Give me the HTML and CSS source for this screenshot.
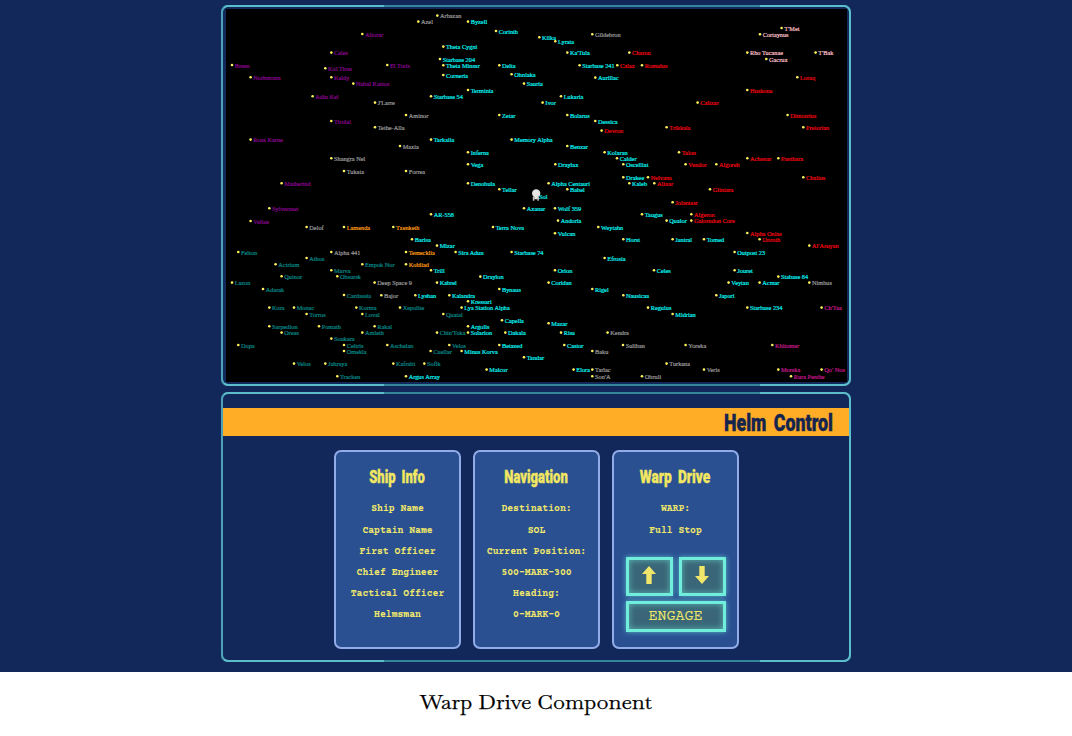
FILE: index.html
```html
<!DOCTYPE html>
<html lang="en">
<head>
<meta charset="utf-8">
<title>Warp Drive Component</title>
<link rel="stylesheet" href="styles.css">
</head>
<body>
<main class="scene">
  <section class="panel map-panel">
    <svg class="star-map" viewBox="226 9 621 373" id="map"></svg>
  </section>
  <section class="panel helm">
    <header class="helm-bar">
      <svg class="helm-title" viewBox="0 0 116 28"><text x="3" y="22.5" textLength="109" lengthAdjust="spacingAndGlyphs">Helm Control</text></svg>
    </header>
    <div class="cards">
      <article class="card">
        <svg class="card-title" viewBox="0 0 124 26"><text x="33.5" y="19" textLength="56" lengthAdjust="spacingAndGlyphs">Ship Info</text></svg>
        <p>Ship Name</p><p>Captain Name</p><p>First Officer</p><p>Chief Engineer</p><p>Tactical Officer</p><p>Helmsman</p>
      </article>
      <article class="card">
        <svg class="card-title" viewBox="0 0 124 26"><text x="29.5" y="19" textLength="64" lengthAdjust="spacingAndGlyphs">Navigation</text></svg>
        <p>Destination:</p><p>SOL</p><p>Current Position:</p><p>500-MARK-300</p><p>Heading:</p><p>0-MARK-0</p>
      </article>
      <article class="card">
        <svg class="card-title" viewBox="0 0 124 26"><text x="26" y="19" textLength="71" lengthAdjust="spacingAndGlyphs">Warp Drive</text></svg>
        <p>WARP:</p><p>Full Stop</p>
        <div class="controls">
          <button class="key" aria-label="Warp up"><svg class="arrow" viewBox="0 0 14 18"><path d="M7 0L14 8H9.7V18H4.3V8H0Z"/></svg></button>
          <button class="key" aria-label="Warp down"><svg class="arrow" viewBox="0 0 14 18"><path d="M7 18L14 10H9.7V0H4.3V10H0Z"/></svg></button>
          <button class="key engage">ENGAGE</button>
        </div>
      </article>
    </div>
  </section>
</main>
<footer class="caption">
  <svg class="caption-text" viewBox="0 0 240 32"><text x="4" y="22" textLength="232" lengthAdjust="spacingAndGlyphs">Warp Drive Component</text></svg>
</footer>
<script src="map.js"></script>
</body>
</html>
```
FILE: styles.css
```css
* { box-sizing: border-box; }
body { margin: 0; background: #fff; overflow: hidden; }
.scene { height: 672px; padding-top: 5px; background: #12285a; display: flex; flex-direction: column; align-items: center; gap: 6px; }
.panel { width: 630px; border: 2px solid #36869b; border-radius: 7px; position: relative; }
.panel::before, .panel::after { content: ""; position: absolute; top: -2px; bottom: -2px; border: 2px solid #5dbecb; pointer-events: none; }
.panel::before { left: -2px; width: 161px; border-right: 0; border-left-color: #4da3b5; border-radius: 7px 0 0 7px; }
.panel::after { right: -2px; width: 89px; border-left: 0; border-radius: 0 7px 7px 0; }
.map-panel { height: 381px; padding: 2px 3px; }
.star-map { display: block; width: 621px; height: 373px; background: #000; }
.star-map text { font-family: "Liberation Serif", serif; font-size: 6.3px; stroke-width: .2px; }
.dot { fill: #fff45c; }
.teal { fill: #008888; stroke: #008888; }
.cyan { fill: #00f4f4; stroke: #00f4f4; }
.gray { fill: #9c9c9c; stroke: #9c9c9c; }
.red { fill: #f00010; stroke: #f00010; }
.pink { fill: #ffc0cb; stroke: #ffc0cb; }
.purple { fill: #8b0090; stroke: #8b0090; }
.magenta { fill: #c7158c; stroke: #c7158c; }
.orange { fill: #ff9d12; stroke: #ff9d12; }
.helm { height: 270px; padding-top: 14px; }
.helm-bar { height: 28px; background: #ffad27; display: flex; justify-content: flex-end; padding-right: 12px; }
.helm-title { width: 116px; height: 28px; overflow: visible; }
.helm-title text, .card-title text { font-family: Roboto, "Liberation Sans", sans-serif; font-weight: 900; word-spacing: 4px; stroke-width: .4px; }
.helm-title text { font-size: 23.5px; fill: #15244f; stroke: #15244f; }
.cards { display: flex; gap: 12px; padding: 14px 0 0 111px; }
.card { width: 127px; height: 199px; padding-top: 12px; background: #2a5092; border: 2px solid #91ace8; border-radius: 7px; color: #eee66a; }
.card-title { display: block; width: 123px; height: 26px; margin-bottom: 8.4px; overflow: visible; }
.card-title text { font-size: 19px; fill: #f1e761; stroke: #f1e761; }
.card p { margin: 0; height: 21.15px; text-align: center; font: bold 9.75px/21px "Courier Prime", "Liberation Mono", monospace; white-space: nowrap; }
.controls { display: grid; grid-template-columns: 47px 47px; gap: 5px 6px; justify-content: center; margin-top: 16px; }
.key { height: 39px; padding: 0 0 3px; display: flex; align-items: center; justify-content: center; background: #3a6678; border: 3px solid #70eedb; box-shadow: 0 0 5px #70eedbaa, inset 0 0 6px #70eedb99; color: #eee66a; }
.engage { grid-column: 1 / 3; height: 31px; padding: 0; font: 15px "Courier Prime", "Liberation Mono", monospace; }
.arrow { width: 14px; height: 18px; fill: #f0e66b; }
.caption { display: flex; justify-content: center; padding-top: 15px; }
.caption-text { width: 240px; height: 32px; overflow: visible; }
.caption-text text { font-family: "Baskervville", "Libre Baskerville", "Liberation Serif", serif; font-size: 20px; fill: #000; stroke: #000; stroke-width: .25px; }
```
FILE: map.js
```js
// Each entry is "dot x, dot y, name".
const systems = {
  gray: `437,15.3,Arbazan|418,21.3,Azel|592,34,Gildebron|374.7,102.3,J'Larre|405.7,114.7,Aminor|374.7,127,Tethe-Alla|399.7,145.7,Maxia|331,158,Shangra Nel|343.7,170.7,Tukata|405.7,170.7,Forrea|306.3,226.7,Delof|331,251.7,Alpha 441|374.3,282.3,Deep Space 9|381,295,Bajor|809,282.3,Nimbus|607.3,332.3,Kendra|622.7,344.7,Suliban|592,350.7,Baku|592,369.3,Tarlac|592,376,Son'A|685.3,344.7,Yoreka|666.3,363.3,Turkana|703.7,369.3,Veris|641.7,376,Obruli`,
  purple: `362,33.7,Altorar|331,52.3,Celes|231.7,64.7,Breen|325,68,Kol Tirus|387,64.7,El Toris|250.3,77,Norhmonn|331,77,Kaldy|353,83.3,Nabal Kartos|312.3,96,Adin Kel|331,120.7,Tirolal|250.3,139.3,Rosa Karne|281.3,183,Matherind|269,208,Sylvernset|250.3,220.7,Velize`,
  teal: `238,251.7,Felton|306.3,257.7,Athos|275.3,264,Actrium|281.3,276,Quinor|362,264,Empok Nor|331,270,Marva|337,276,Obsursk|231.7,282.3,Lazon|262.7,288.7,Adarak|343.7,294.7,Cardassia|269,307.3,Kora|293.7,307.3,Monac|306.3,313.7,Torros|356,307.3,Korma|362,313.7,Loval|399.7,307.3,Xepolite|269,326,Sarpedion|281.3,332.3,Oreas|318.7,326,Pomath|374.3,326,Rakal|362,332.3,Amleth|331,338.3,Soukara|343.7,344.7,Celtris|343.7,350.7,Omekla|387,344.7,Aschelan|238,344.7,Dopa|293.7,363.3,Velos|325,363.3,Jahraya|337,376,Tracken|393,363.3,Kafrabi|424,363.3,Sofik|443,313.7,Quatal|436.7,332.3,Chin'Toka|449,344.7,Velos|430.3,350.7,Cuellar`,
  cyan: `467.7,21.3,Byzell|495.7,30.7,Corinth|539,37,Kilka|555,41,Lyrata|443,46.3,Theta Cygni|439.7,58.7,Starbase 204|443,65,Theta Minsar|443,74.7,Corneria|567,52.3,Ka'Tula|499,65,Delta|511.3,74,Ohniaka|523.7,83.3,Sauria|579.3,65,Starbase 241|595,77.3,Aurillac|467.7,89.7,Terminia|430.7,96,Starbase 54|560.7,96,Lukaria|542.3,102.3,Ivor|499,114.7,Zetar|567,114.7,Bolarus|595,120.7,Dessica|430.7,139.3,Tarkalia|511.3,139.3,Memory Alpha|567,145.7,Benzar|467.7,152,Inferna|467.7,164,Vega|555,164,Draylax|604.3,152,Kolaran|616.7,158,Calder|623,164,Oscelliat|623,177,Drakee|629,183,Kaleb|467.7,183,Denobula|499,189,Tellar|548.3,183,Alpha Centauri|567,189,Babel|523.7,208,Axanar|554.7,208,Wolf 359|430.7,214,AR-558|557.7,220.3,Andoria|492.7,226.7,Terra Nova|554.7,233,Vulcan|598,226.7,Weytahn|641.7,214,Taugus|666.3,220.3,Qualor|411.7,239,Barisa|436.7,245.3,Mizar|455.3,251.7,Sira Adun|511.3,251.7,Starbase 74|604.3,257.7,Efrosia|623,239,Horst|672.3,239,Jantral|703.7,239,Tomed|734.3,251.7,Outpost 23|430.7,270,Trill|436.7,282.3,Kabrel|480,276.3,Draylon|554.7,270,Orion|548.3,282.3,Coridan|499,288.7,Bynaus|592,288.7,Rigel|653.7,270,Celes|734.3,270,Jouret|778,276.3,Stabase 84|728.3,282.3,Veytan|759.3,282.3,Acmar|415,295,Lyshan|449,295,Kalandra|467.7,301,Kressari|461.3,307.3,Lya Station Alpha|623,295,Nausicaa|716,295,Japori|647.7,307.3,Regulus|672.3,313.7,Midrian|747,307.3,Starbase 234|501.7,320,Capella|548.3,323,Mazar|467.7,326,Argolis|467.7,332.3,Solarion|505,332.3,Dakala|560.7,332.3,Risa|499,344.7,Betazed|461.3,350.7,Minus Korva|564,344.7,Castor|523.7,357,Tandar|486.3,369.3,Malcor|573.3,369.3,Elora|405.7,376,Argus Array`,
  red: `629,52.3,Charon|617,65,Calax|641.7,65,Romulus|797,77,Loraq|747,89.7,Huskona|697.3,102.3,Caltzar|787.3,114.7,Dimorrius|803,127,Pretorian|601.3,130.3,Devron|666.3,127,Trikkala|678.7,152,Talon|685.3,164,Vendor|716,164,Algoreh|747,158,Achenar|778,158,Panthara|803,177,Chaltus|647.7,177,Nelvana|654,183,Alinar|709.7,189,Glintara|672.3,202,Jolantasr|691,214,Algeron|691,220.3,Galorndon Core|747,232.7,Alpha Onias|759.3,239,Unroth|809,245.3,Al'Asuyan`,
  pink: `781.3,27.7,T'Met|759.7,34,Cortaynus|747,52.3,Rho Tucanae|766,58.7,Gacrux|815.3,52.3,T'Bak`,
  magenta: `821.3,307.3,Ch'Taa|772,344.7,Khitomer|778,369.3,Morska|790.7,376,Rura Penthe|821.3,369.3,Qo' Nos`,
  orange: `343.7,226.7,Lamenda|393,226.7,Tzenketh|405.7,251.7,Temecklia|405.7,264,Kobliad`
};
const map = document.getElementById("map");
const add = (tag, attrs, text) => {
  const node = document.createElementNS("http://www.w3.org/2000/svg", tag);
  for (const key in attrs) node.setAttribute(key, attrs[key]);
  if (text) node.textContent = text;
  map.appendChild(node);
};
for (const tone in systems) {
  for (const entry of systems[tone].split("|")) {
    const [x, y, name] = entry.split(",");
    add("text", { x: +x + 3, y: +y + 3.1, class: tone }, name);
    add("circle", { cx: +x + 0.3, cy: +y + 0.3, r: 1.3, class: "dot" });
  }
}
add("text", { x: 539, y: 198.8, class: "cyan" }, "Sol");
// Ship marker.
add("path", { d: "M532 193.5a4.2 4.2 0 1 1 8.4 0q0 2.4-2.2 3.2v2.5h-4v-2.5q-2.2-.8-2.2-3.2z", fill: "#e8e4e0" });
add("path", { d: "M532.8 196.5h1.5v4.2h-1.5zM537.4 196.5h1.5v4.2h-1.5z", fill: "#c4c4c4" });
```
